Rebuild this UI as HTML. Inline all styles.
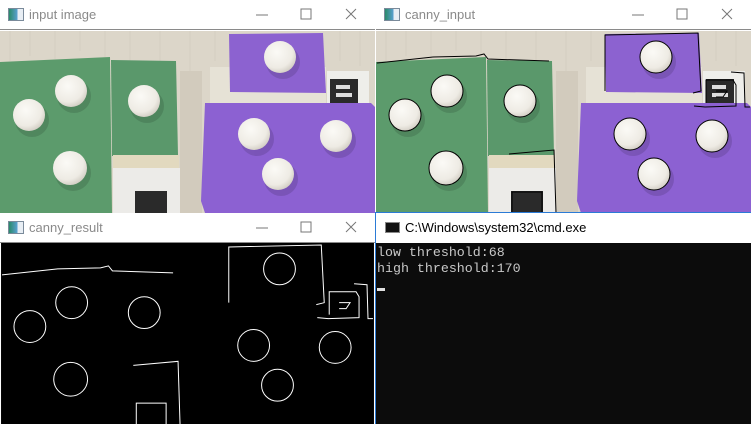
<!DOCTYPE html>
<html><head><style>
body{margin:0;width:751px;height:424px;overflow:hidden;background:#fff;position:relative;font-family:"Liberation Sans",sans-serif}
.tb{position:absolute;height:30px;background:#fff;border-bottom:1px solid #8a8a8a;box-sizing:border-box}
.tb .ic{position:absolute;left:8px;top:8px;width:14px;height:11px;border:1px solid #7a8a9a;background:linear-gradient(90deg,#2a8a6a,#5aa0d0 60%,#e8eef4 60%)}
.tb .t{position:absolute;left:29px;top:7px;font-size:13px;color:#8a8a8a}
.tb svg{position:absolute;top:0}
.img{position:absolute;width:375px;height:182px}
</style></head><body>
<svg width="0" height="0" style="position:absolute">
<defs>
<radialGradient id="bg" cx="0.4" cy="0.35" r="0.7"><stop offset="0" stop-color="#fbfaf6"/><stop offset="0.7" stop-color="#eeebe4"/><stop offset="1" stop-color="#cfcac0"/></radialGradient>
<g id="scene">
<rect width="375" height="182" fill="#dcd6c9"/>
<g stroke="#cdc6b6" stroke-width="1" opacity=".4">
<path d="M10 0v30M30 0v25M55 0v28M80 0v20M105 0v26M130 0v30M160 0v40M190 0v80M215 0v30M340 0v30M360 0v35"/>
</g>
<polygon points="0,31 110,26 112,182 0,182" fill="#5c9b6c"/>
<polygon points="111,29 176,30 178,124 112,125" fill="#5a986b"/>
<rect x="113" y="124" width="66" height="14" fill="#e2d9bf"/>
<rect x="113" y="137" width="67" height="45" fill="#ecebe8"/>
<rect x="135" y="160" width="32" height="22" fill="#2a2a2a"/>
<rect x="180" y="40" width="22" height="142" fill="#d2cbbd"/>
<rect x="210" y="36" width="116" height="72" fill="#e6e2d6"/>
<polygon points="229,3 323,2 326,62 230,61" fill="#8c62d0"/>
<rect x="327" y="40" width="42" height="66" fill="#eeeeea"/>
<rect x="330" y="48" width="28" height="26" fill="#2a2a2a"/>
<rect x="336" y="54" width="14" height="4" fill="#ddd"/><rect x="336" y="62" width="16" height="4" fill="#ddd"/>
<polygon points="205,72 371,72 375,76 375,182 205,182 201,170" fill="#8c61d2"/>
<g fill="#000" opacity=".12">
<circle cx="32" cy="89" r="17"/><circle cx="74" cy="65" r="17"/><circle cx="147" cy="75" r="17"/><circle cx="73" cy="142" r="18"/>
<circle cx="283" cy="31" r="17"/><circle cx="257" cy="108" r="17"/><circle cx="339" cy="110" r="17"/><circle cx="281" cy="148" r="17"/>
</g>
<g fill="url(#bg)">
<circle cx="29" cy="84" r="16"/><circle cx="71" cy="60" r="16"/><circle cx="144" cy="70" r="16"/><circle cx="70" cy="137" r="17"/>
<circle cx="280" cy="26" r="16"/><circle cx="254" cy="103" r="16"/><circle cx="336" cy="105" r="16"/><circle cx="278" cy="143" r="16"/>
</g>
</g>
<g id="edges" fill="none" stroke-width="1">
<circle cx="29" cy="84" r="16"/><circle cx="71" cy="60" r="16"/><circle cx="144" cy="70" r="16"/><circle cx="70" cy="137" r="17"/>
<circle cx="280" cy="26" r="16"/><circle cx="254" cy="103" r="16"/><circle cx="336" cy="105" r="16"/><circle cx="278" cy="143" r="16"/>
<path d="M1 32 L57 26 L100 25 L108 23 L112 28 L173 30"/>
<path d="M229 60 L229 4 L322 2 L325 60 L317 62"/>
<path d="M133 123 L178 119 L180 182"/>
<path d="M136 182 L136 161 L166 161 L166 182"/>
<path d="M330 72 L330 49 L357 49 L360 54 L360 75 L329 76 L318 75"/>
<path d="M355 41 L368 42 L369 76 L374 76"/>
<path d="M340 60 L351 60 L347 66 L340 66"/>
</g>
</defs></svg>

<div class="tb" style="left:0;top:0;width:375px"><div class="ic"></div><div class="t">input image</div>
<svg width="375" height="30"><path d="M256 15h12M301 9h10v10h-10zM346 9l10 10M356 9l-10 10" stroke="#777" fill="none"/></svg></div>
<svg class="img" style="left:0;top:31px" viewBox="0 0 375 182"><use href="#scene"/></svg>

<div class="tb" style="left:376px;top:0;width:375px"><div class="ic"></div><div class="t">canny_input</div>
<svg width="375" height="30"><path d="M256 15h12M301 9h10v10h-10zM346 9l10 10M356 9l-10 10" stroke="#777" fill="none"/></svg></div>
<svg class="img" style="left:376px;top:31px" viewBox="0 0 375 182"><use href="#scene"/><use href="#edges" stroke="#000"/></svg>

<div class="tb" style="left:0;top:213px;width:375px"><div class="ic"></div><div class="t">canny_result</div>
<svg width="375" height="30"><path d="M256 15h12M301 9h10v10h-10zM346 9l10 10M356 9l-10 10" stroke="#777" fill="none"/></svg></div>
<svg class="img" style="left:0;top:243px;height:181px" viewBox="0 0 375 182"><rect width="375" height="182" fill="#000"/><use href="#edges" stroke="#fff"/></svg>

<div style="position:absolute;left:375px;top:212px;width:376px;height:212px;background:#0c0c0c;border-left:1px solid #2b7bd6;border-top:1px solid #2b7bd6;box-sizing:border-box">
<div style="height:30px;background:#fff;position:relative">
<div style="position:absolute;left:9px;top:9px;width:15px;height:11px;background:#111;border:1px solid #888;box-sizing:border-box"></div>
<div style="position:absolute;left:29px;top:7px;font-size:13px;color:#000">C:\Windows\system32\cmd.exe</div>
</div>
<div style="font-family:'Liberation Mono',monospace;font-size:13.3px;line-height:16px;color:#c8c8c8;padding-left:1px;padding-top:2px;white-space:pre">low threshold:68
high threshold:170</div>
<div style="position:absolute;left:1px;top:75px;width:8px;height:3px;background:#e0e0e0"></div>
</div>
</body></html>
